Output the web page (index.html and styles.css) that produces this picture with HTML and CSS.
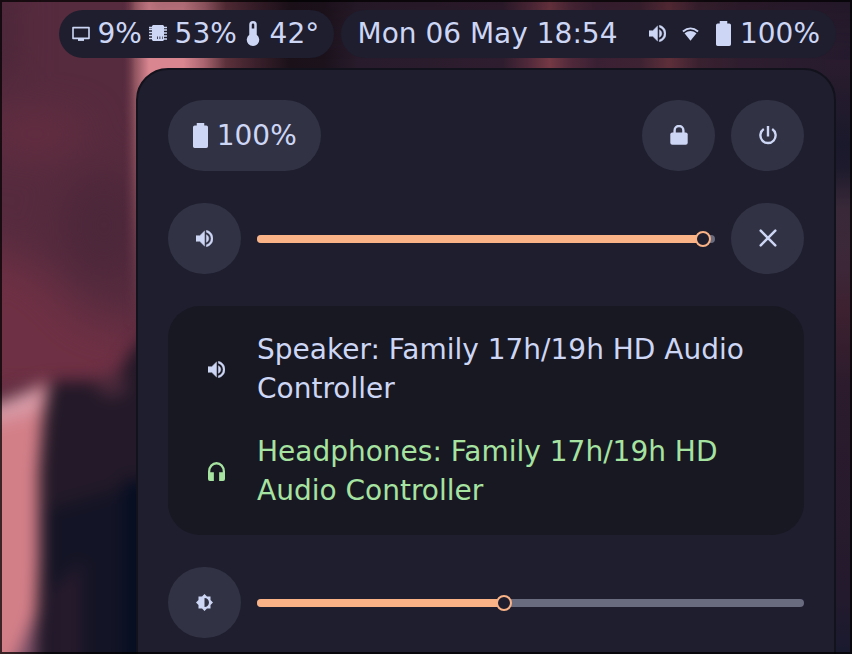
FILE: index.html
```html
<!DOCTYPE html>
<html lang="en">
<head>
<meta charset="utf-8">
<title>Desktop</title>
<link rel="stylesheet" href="styles.css">
</head>
<body>
<svg width="0" height="0" class="defs">
  <symbol id="volume" viewBox="3 3.23 18 17.54"><path d="M3 9v6h4l5 5V4L7 9H3zm13.5 3c0-1.77-1.02-3.29-2.5-4.03v8.05c1.48-.73 2.5-2.25 2.5-4.02zM14 3.23v2.06c2.89.86 5 3.54 5 6.71s-2.11 5.85-5 6.71v2.06c4.01-.91 7-4.49 7-8.77s-2.99-7.86-7-8.77z" stroke="currentColor" stroke-width=".5"/></symbol>
  <symbol id="battery" viewBox="6 2 12 20"><path d="M16.67 4H15V2H9v2H7.33A1.33 1.33 0 0 0 6 5.33v15.34C6 21.4 6.6 22 7.33 22h9.34A1.33 1.33 0 0 0 18 20.67V5.33C18 4.6 17.4 4 16.67 4z"/></symbol>
</svg>
<div class="desktop">
  <svg class="wallpaper" viewBox="0 0 852 654" aria-hidden="true">
    <defs>
      <filter id="b6" x="-50%" y="-50%" width="200%" height="200%" color-interpolation-filters="sRGB"><feGaussianBlur stdDeviation="8"/></filter>
      <filter id="b18" x="-80%" y="-80%" width="260%" height="260%" color-interpolation-filters="sRGB"><feGaussianBlur stdDeviation="20"/></filter>
      <linearGradient id="top" gradientUnits="userSpaceOnUse" x1="0" y1="0" x2="852" y2="0">
        <stop offset=".143" stop-color="#572b3e" stop-opacity="0"/>
        <stop offset=".158" stop-color="#8c525e"/>
        <stop offset=".175" stop-color="#d98690"/>
        <stop offset=".215" stop-color="#d98690"/>
        <stop offset=".24" stop-color="#a8646e"/>
        <stop offset=".265" stop-color="#5c313b"/>
        <stop offset=".3" stop-color="#3b202b"/>
        <stop offset=".34" stop-color="#1b1119"/>
        <stop offset=".38" stop-color="#1b121c"/>
        <stop offset=".42" stop-color="#281b2b"/>
        <stop offset=".59" stop-color="#2e1d2e"/>
        <stop offset=".62" stop-color="#50293a"/>
        <stop offset=".645" stop-color="#743944"/>
        <stop offset=".67" stop-color="#50293a"/>
        <stop offset=".7" stop-color="#3a2033"/>
        <stop offset=".75" stop-color="#3c2232"/>
        <stop offset=".785" stop-color="#5e2f3a"/>
        <stop offset=".82" stop-color="#3a2130"/>
        <stop offset=".87" stop-color="#2e1d2e"/>
        <stop offset="1" stop-color="#251b2e"/>
      </linearGradient>
      <linearGradient id="fade" x1="0" y1="0" x2="0" y2="1">
        <stop offset=".25" stop-color="#fff"/>
        <stop offset="1" stop-color="#000"/>
      </linearGradient>
      <mask id="down" maskUnits="userSpaceOnUse" x="0" y="0" width="852" height="330"><rect width="852" height="330" fill="url(#fade)"/></mask>
      <linearGradient id="right" x1="0" y1="0" x2="0" y2="1">
        <stop offset="0" stop-color="#2a1c2e"/>
        <stop offset=".14" stop-color="#1a192b"/>
        <stop offset=".18" stop-color="#1c1a2c"/>
        <stop offset=".25" stop-color="#392938"/>
        <stop offset=".35" stop-color="#3c2738"/>
        <stop offset=".42" stop-color="#3d2130"/>
        <stop offset=".55" stop-color="#2b1b2c"/>
        <stop offset=".9" stop-color="#241a2d"/>
        <stop offset="1" stop-color="#191a2f"/>
      </linearGradient>
      <linearGradient id="shade" x1="0" y1="0" x2="0" y2="1">
        <stop offset="0" stop-color="#1a0f16" stop-opacity=".3"/>
        <stop offset="1" stop-color="#1a0f16" stop-opacity="0"/>
      </linearGradient>
    </defs>
    <rect width="852" height="654" fill="#572b3e"/>
    <g filter="url(#b18)">
      <ellipse cx="35" cy="134" rx="50" ry="16" fill="#682d41"/>
      <ellipse cx="104" cy="225" rx="42" ry="55" fill="#4c273a"/>
      <path d="M-40 240L40 270L90 320L150 325V410H-40z" fill="#6e3044"/>
      <rect x="-20" y="-20" width="30" height="100" fill="#452537"/>
    </g>
    <rect x="120" width="732" height="330" fill="url(#top)" mask="url(#down)"/>
    <rect x="145" y="-10" width="730" height="60" fill="url(#shade)" filter="url(#b6)"/>
    <g filter="url(#b6)">
      <path d="M-20 405L30 386L60 381L115 381L132 350L160 325V690H-20z" fill="#231928"/>
      <ellipse cx="112" cy="386" rx="16" ry="11" fill="#48293a"/>
      <path d="M48 510L150 480V690H48z" fill="#131425"/>
      <path d="M124 480H160V690H124z" fill="#060e22"/>
      <path d="M52 590L82 560V690H52z" fill="#261a2c"/>
      <path d="M-30 408L0 402L50 381L43 420L39 470V560L34 690H-30z" fill="#d37f88"/>
      <path d="M-10 406L46 384L38 412L-10 424z" fill="#d89ca8"/>
      <path d="M2 690L36 612V690z" fill="#7b5068"/>
    </g>
    <rect x="825" y="60" width="27" height="594" fill="url(#right)"/>
  </svg>
  <header class="bar">
    <div class="pill stats">
      <svg class="wide" viewBox="0 0 18 16"><path d="M1 1.600h16v10.800H1z" fill="none" stroke="currentColor" stroke-width="1.600" stroke-linejoin="round"/><path d="M6 12h6v2.900H6z"/></svg>
      <span>9%</span>
      <svg class="wide chip" viewBox="0 0 18 16"><path fill-rule="evenodd" d="M4 0h10l1 1v.7h3v1.500h-3v1.100h3v1.500h-3v1.500h3v1.500h-3v1.500h3v1.500h-3v1.500h3v1.500h-3V15l-1 1H4l-1-1v-.700H0v-1.500h3v-1.500H0V9.800h3V8.300H0V6.800h3V5.300H0V3.800h3V3.200H0V1.700h3V1zM8 11.500v2.500h.8v-2.500zM10.500 11.500v2.500h.8v-2.500zM13 11.500v2.500h.6v-2.500z"/></svg>
      <span>53%</span>
      <svg class="wide thermo" viewBox="7 2 10 20"><path fill-rule="evenodd" d="M15 13V5a3 3 0 0 0-6 0v8a5 5 0 1 0 6 0m-3-9a1 1 0 0 1 1 1v3h-2V5a1 1 0 0 1 1-1Z"/></svg>
      <span>42°</span>
    </div>
    <div class="pill status">
      <span class="clock">Mon 06 May 18:54</span>
      <svg class="small"><use href="#volume"/></svg>
      <svg class="small wifi" viewBox="0 0 17 14"><path d="M.3 3.800Q8.500-3 16.700 3.800L15.400 5.300Q8.500-.6 1.600 5.300z"/><path d="M2.500 6.300Q8.500 1.700 14.500 6.300L8.500 13.700z"/></svg>
      <svg class="battery"><use href="#battery"/></svg>
      <span>100%</span>
    </div>
  </header>
  <main class="panel">
    <div class="row">
      <div class="button charge"><svg class="battery"><use href="#battery"/></svg><span>100%</span></div>
      <div class="spacer"></div>
      <div class="button round"><svg class="raised" width="18" height="20" viewBox="0 0 18 20"><rect x=".3" y="7.400" width="17.400" height="12.300" rx="2"/><path d="M4.600 8V5.400a4.400 4.400 0 0 1 8.800 0V8" fill="none" stroke="currentColor" stroke-width="2.400"/></svg></div>
      <div class="button round"><svg class="raised" width="18" height="20" viewBox="0 0 18 20"><path d="M4.800 4.100a7.600 7.600 0 1 0 8.400 0M9 .9v10.600" fill="none" stroke="currentColor" stroke-width="2.400"/></svg></div>
    </div>
    <div class="row">
      <div class="button round"><svg class="small"><use href="#volume"/></svg></div>
      <div class="slider"><div class="fill" style="width:446px"></div><div class="knob"></div></div>
      <div class="button round"><svg class="raised" width="18" height="18" viewBox="0 0 18 18"><path d="M1.700 1.700l14.600 14.600m0-14.600L1.700 16.300" fill="none" stroke="currentColor" stroke-width="2.500" stroke-linecap="round"/></svg></div>
    </div>
    <div class="card">
      <div class="device"><svg class="small"><use href="#volume"/></svg><span>Speaker: Family 17h/19h HD Audio<br>Controller</span></div>
      <div class="device active"><svg width="17" height="19" viewBox="3 3 18 18" preserveAspectRatio="none"><path d="M12 3a9 9 0 0 0-9 9v7a2 2 0 0 0 2 2h4.200v-8.200H5.400V12a6.600 6.600 0 0 1 13.200 0v.8h-3.800V21H19a2 2 0 0 0 2-2v-7a9 9 0 0 0-9-9z"/></svg><span>Headphones: Family 17h/19h HD<br>Audio Controller</span></div>
    </div>
    <div class="row">
      <div class="button round"><svg width="17" height="17" viewBox=".69 .69 22.620 22.620"><path d="M20 15.310L23.310 12 20 8.690V4h-4.690L12 .69 8.690 4H4v4.690L.69 12 4 15.310V20h4.690L12 23.310 15.310 20H20v-4.690zM12 18V6c3.310 0 6 2.690 6 6s-2.690 6-6 6z"/></svg></div>
      <div class="slider"><div class="fill" style="width:247px"></div><div class="knob"></div></div>
    </div>
  </main>
</div>
</body>
</html>
```
FILE: styles.css
```css
* { box-sizing: border-box; }

body {
  margin: 0;
  overflow: hidden;
  font: 28px/39px "DejaVu Sans", sans-serif;
  color: #cdd6f4;
}

svg { fill: currentColor; flex: none; display: block; }
.defs { position: absolute; }

.desktop {
  position: relative;
  width: 852px;
  height: 654px;
  padding-top: 10px;
  overflow: hidden;
  isolation: isolate;
}

/* thin dark frame around the whole screen */
.desktop::after {
  content: "";
  position: absolute;
  inset: 0;
  border: 2px solid rgba(0, 0, 0, 0.72);
}

.wallpaper {
  position: absolute;
  inset: 0;
  width: 852px;
  height: 654px;
  z-index: -1;
}

.bar { display: flex; gap: 7px; margin-left: 59px; height: 48px; white-space: nowrap; }
.pill { display: flex; align-items: center; background: #1e1e2e; border-radius: 24px; height: 48px; padding-bottom: 1px; }
.stats { width: 275px; padding-left: 13px; gap: 7.400px; }
.status { width: 495px; padding-left: 16.500px; }

.wide { width: 18px; height: 16px; }
.chip { margin-top: -1px; }
.thermo { height: 25px; }
.small { width: 17px; height: 17px; }
.battery { width: 15px; height: 25px; margin-right: 9px; }
.clock { margin-right: 31.500px; }
.wifi { height: 14px; margin: 0 17px 0 16px; }

.panel {
  width: 700px;
  height: 640px;
  margin: 10px 0 0 136px;
  padding: 30px;
  border: 2px solid #12121c;
  border-radius: 32px;
  background: #1e1e2e;
}

.row { display: flex; align-items: center; gap: 16px; height: 71px; margin-bottom: 32px; }
.spacer { flex: 1; }
.button { display: flex; align-items: center; justify-content: center; height: 71px; background: #313244; border-radius: 36px; }
.round { width: 73px; }
.charge { width: 153px; padding-left: 1px; }
.charge .battery { margin-right: 8.500px; }
.raised { margin-bottom: 1px; }

.slider { flex: 1; display: flex; align-items: center; height: 8px; margin-top: 1px; border-radius: 4px; background: #696b7f; }
.fill { height: 8px; border-radius: 4px; background: #fab387; }
.knob { flex: none; width: 16px; height: 16px; margin-left: -8px; border: 2px solid #fab387; border-radius: 50%; background: #1e1e2e; }

.card { height: 229px; margin-bottom: 32px; padding: 24px 0 0 40px; background: #181822; border-radius: 32px; }
.device { display: flex; align-items: center; height: 78px; margin-bottom: 24px; white-space: nowrap; }
.device svg { margin-right: 32px; }
.active { color: #a6e3a1; }
```
